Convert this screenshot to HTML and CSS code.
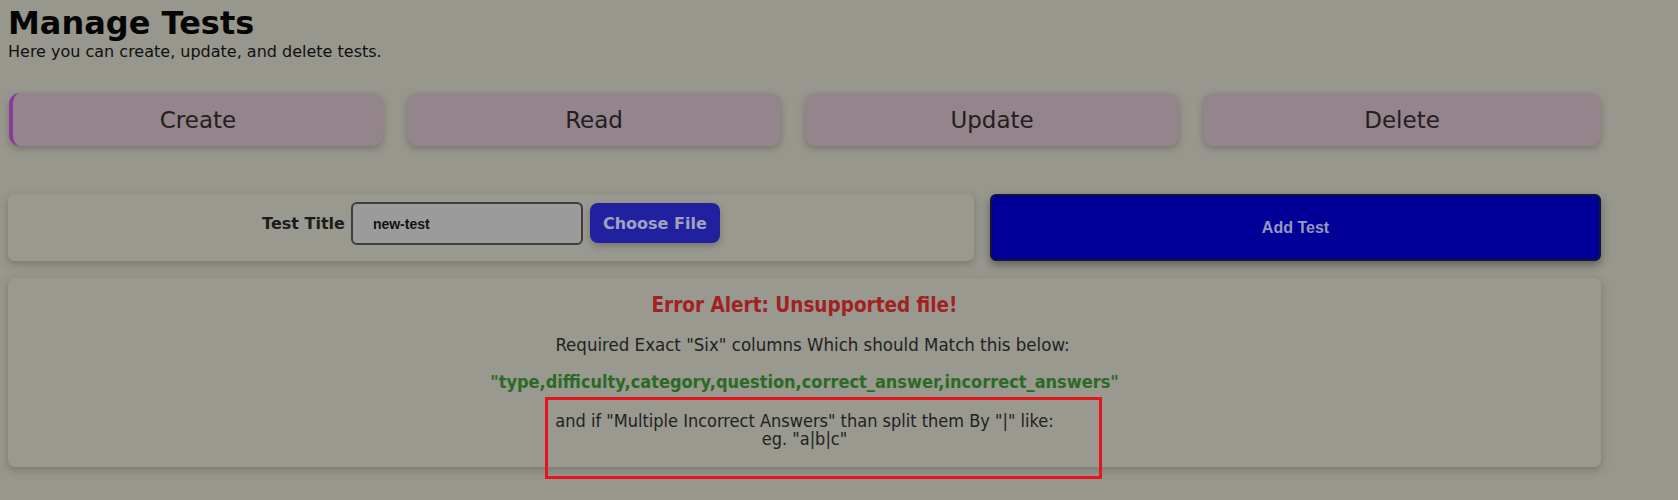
FILE: index.html
```html
<!DOCTYPE html>
<html lang="en">
<head>
<meta charset="utf-8">
<title>Manage Tests</title>
<link rel="stylesheet" href="styles.css">
</head>
<body>
<div class="page">
  <header class="page-header">
    <h1 class="page-title">Manage Tests</h1>
    <p class="page-subtitle">Here you can create, update, and delete tests.</p>
  </header>

  <nav class="tabs">
    <button class="tab tab-active">Create</button>
    <button class="tab">Read</button>
    <button class="tab">Update</button>
    <button class="tab">Delete</button>
  </nav>

  <section class="form-row">
    <form class="card upload-card">
      <label class="field-label" for="title">Test Title</label>
      <input class="text-input" id="title" type="text" value="new-test">
      <span class="file-btn">Choose File</span>
    </form>
    <button class="add-btn">Add Test</button>
  </section>

  <section class="card error-card">
    <h3 class="error-title">Error Alert: Unsupported file!</h3>
    <p class="error-text">Required Exact "Six" columns Which should Match this below:</p>
    <p class="error-columns">"type,difficulty,category,question,correct_answer,incorrect_answers"</p>
    <p class="error-note">and if "Multiple Incorrect Answers" than split them By "|" like:<br>eg. "a|b|c"</p>
    <div class="annotation"></div>
  </section>
</div>
</body>
</html>
```

FILE: styles.css
```css
html, body {
  margin: 0;
  padding: 0;
  background: #97978e;
  height: 100%;
}

body {
  font-family: "DejaVu Sans", Verdana, sans-serif;
  color: #1e1e1e;
}

.page {
  max-width: 1593px;
  padding: 5px 0 0 8px;
}

.page-title {
  margin: 0;
  font-size: 32px;
  font-weight: bold;
  line-height: 37px;
  color: #050505;
}

.page-subtitle {
  margin: 0;
  font-size: 16px;
  line-height: 19px;
  color: #101010;
}

.tabs {
  display: grid;
  grid-template-columns: 1fr 1fr 1fr 1.064fr;
  gap: 24px;
  margin-top: 32px;
  padding-left: 1px;
}

.tab {
  height: 53px;
  border: none;
  border-radius: 11px;
  background: #94848c;
  color: #221e22;
  font-family: "DejaVu Sans", Verdana, sans-serif;
  font-size: 23px;
  padding: 0;
  box-shadow: 0 3px 7px rgba(60, 60, 50, 0.35);
}

.tab-active {
  border-left: 4px solid #8a3a9c;
}

.form-row {
  display: grid;
  grid-template-columns: 966fr 611fr;
  gap: 16px;
  margin-top: 48px;
}

.card {
  background: #99998f;
  border-radius: 7px;
  box-shadow: 0 3px 8px rgba(60, 60, 50, 0.35);
}

.upload-card {
  display: flex;
  justify-content: center;
  align-items: baseline;
  padding: 8px 8px 16px;
}

.field-label {
  font-family: "DejaVu Sans", Verdana, sans-serif;
  font-weight: bold;
  font-size: 16px;
  color: #1c1c1c;
  margin-right: 6px;
}

.text-input {
  box-sizing: border-box;
  width: 232px;
  height: 43px;
  border: 2px solid #3e3e3c;
  border-radius: 6px;
  background: #9b9b9b;
  padding: 0 20px;
  font-family: "Liberation Sans", Arial, sans-serif;
  font-weight: bold;
  font-size: 14px;
  color: #121212;
  margin-right: 7px;
}

.file-btn {
  display: inline-block;
  box-sizing: border-box;
  width: 130px;
  height: 40px;
  padding: 11px 0 0;
  line-height: 19px;
  text-align: center;
  border-radius: 8px;
  background: #21219f;
  color: #a2a1c0;
  font-weight: bold;
  font-size: 16px;
  box-shadow: 0 3px 7px rgba(40, 40, 40, 0.3);
}

.add-btn {
  border: 2px solid #141436;
  border-radius: 6px;
  background: #000099;
  color: #9898bc;
  font-family: "Liberation Sans", Arial, sans-serif;
  font-weight: bold;
  font-size: 16px;
  box-shadow: 0 4px 8px rgba(30, 30, 30, 0.45);
  padding: 0;
}

.error-card {
  position: relative;
  margin-top: 17px;
  padding: 16px 16px 19px;
  text-align: center;
  font-family: "DejaVu Sans Condensed", "DejaVu Sans", sans-serif;
}

.error-title {
  margin: 0;
  font-size: 20.5px;
  line-height: 22px;
  font-weight: bold;
  color: #a02222;
}

.error-text {
  margin: 19px 0 0 16px;
  font-size: 18.5px;
  line-height: 20px;
  color: #222;
}

.error-columns {
  margin: 17px 0 0;
  font-size: 18px;
  line-height: 20px;
  font-weight: bold;
  color: #2b6a24;
}

.error-note {
  margin: 20px 0 0;
  font-size: 18px;
  line-height: 18px;
  color: #222;
}

.annotation {
  position: absolute;
  left: 537px;
  top: 119px;
  width: 551px;
  height: 76px;
  border: 3px solid #e3161d;
}
```
